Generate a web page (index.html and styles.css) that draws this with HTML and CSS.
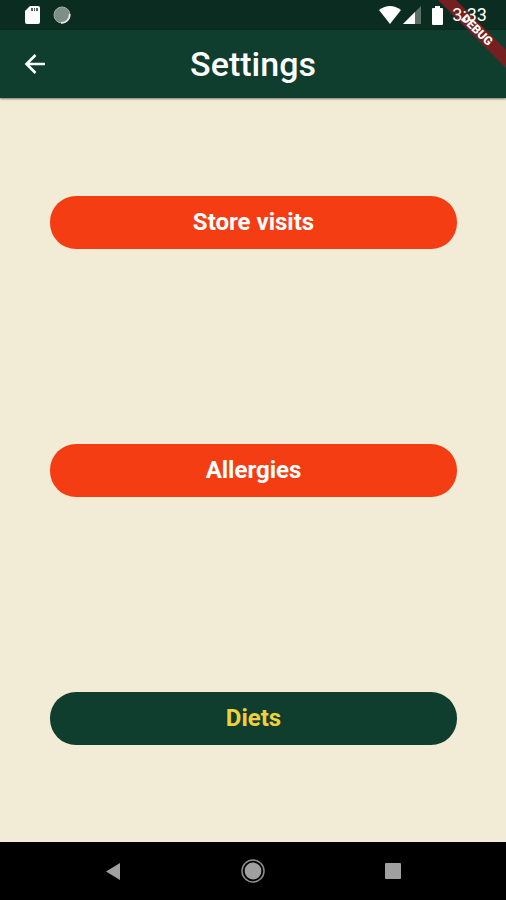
FILE: index.html
```html
<!DOCTYPE html>
<html lang="en">
  <head>
    <meta charset="UTF-8" />
    <meta name="viewport" content="width=device-width, initial-scale=1.0" />
    <title>Settings</title>
    <link rel="stylesheet" href="styles.css">
  </head>
  <body>
    <div class="screen">
      <div class="status-bar">
        <div class="status-left">
          <svg width="15" height="18" viewBox="0 0 15 18">
            <path fill="#fff" d="M5 0h8q2 0 2 2v14q0 2-2 2H2q-2 0-2-2V5z" />
            <path fill="#56635c" d="M6 2h2v3H6zM9 2h1v3H9zM11 2h2v3h-2z" />
          </svg>
          <svg width="18" height="18" viewBox="0 0 18 18">
            <circle cx="9" cy="9" r="8" fill="#7f8f88" stroke="#a3afa9" stroke-width="1" />
            <path d="M16.6 8A8 8 0 0 1 8 16.8" fill="none" stroke="#e6ebe8" stroke-width="1.6" />
          </svg>
        </div>
        <div class="status-right">
          <svg width="22" height="18" viewBox="0 0 22 18">
            <path fill="#fff" d="M0 4Q11-4 22 4L11 18z" />
          </svg>
          <svg width="18" height="18" viewBox="0 0 18 18">
            <path fill="#5a7067" d="M18 0v18H0z" />
            <path fill="#fff" d="M12 6v12H0z" />
          </svg>
          <svg class="battery" width="11" height="19" viewBox="0 0 11 19">
            <path fill="#fff" d="M3 0h5v2h2q1 0 1 1v15q0 1-1 1H1q-1 0-1-1V3q0-1 1-1h2z" />
          </svg>
          <span class="time">3:33</span>
        </div>
      </div>

      <header class="app-bar">
        <button class="back-btn" aria-label="Back">
          <svg width="22" height="22" viewBox="0 0 22 22">
            <path d="M21 11H3M11.5 2L2.5 11L11.5 20" fill="none" stroke="#fff" stroke-width="2.6" />
          </svg>
        </button>
        <h1>Settings</h1>
      </header>

      <main class="options">
        <button class="option">Store visits</button>
        <button class="option">Allergies</button>
        <button class="option diets">Diets</button>
      </main>

      <nav class="nav-bar">
        <button aria-label="Back">
          <svg width="24" height="24" viewBox="0 0 24 24">
            <path fill="#a0a0a0" d="M19 4v17L5 12.5z" />
          </svg>
        </button>
        <button aria-label="Home">
          <svg width="24" height="24" viewBox="0 0 24 24">
            <circle cx="12" cy="12" r="11" fill="none" stroke="#8c8c8c" stroke-width="1.5" />
            <circle cx="12" cy="12" r="8.4" fill="#a0a0a0" />
          </svg>
        </button>
        <button aria-label="Overview">
          <svg width="24" height="24" viewBox="0 0 24 24">
            <rect x="4" y="4" width="16" height="16" rx="1" fill="#a0a0a0" />
          </svg>
        </button>
      </nav>

      <svg class="debug-banner" width="68" height="68" viewBox="0 0 68 68">
        <path fill="#761f20" d="M0 0h18l50 50v18z" />
        <text x="39" y="30" dy="4" transform="rotate(45 39 30)" text-anchor="middle">DEBUG</text>
      </svg>
    </div>
  </body>
</html>
```

FILE: styles.css
```css
* {
    box-sizing: border-box;
}

body {
    margin: 0;
    font-family: Roboto, Arial, sans-serif;
    background-color: #f2ebd5;
}

.screen {
    position: relative;
    display: flex;
    flex-direction: column;
    min-height: 100vh;
    overflow: hidden;
}

button {
    padding: 0;
    border: none;
    background: none;
    font-family: inherit;
    cursor: pointer;
}

svg {
    display: block;
}

/* Status bar */

.status-bar {
    display: flex;
    justify-content: space-between;
    height: 30px;
    padding: 0 19px 0 25px;
    background: #0b2c21;
    color: #fff;
}

.status-left,
.status-right {
    display: flex;
    align-items: center;
}

.status-left {
    gap: 13px;
}

.status-right {
    gap: 2px;
}

.battery {
    margin: 0 7px 0 9px;
}

.time {
    position: relative;
    z-index: 2;
    font-size: 18px;
    line-height: 32px;
}

.debug-banner {
    position: absolute;
    top: 0;
    right: 0;
    z-index: 1;
}

.debug-banner text {
    fill: #fff;
    font-size: 12px;
    font-weight: 900;
}

/* App bar */

.app-bar {
    display: grid;
    grid-template-columns: 70px 1fr 70px;
    align-items: center;
    height: 68px;
    background: #0f3d2e;
    box-shadow: 0 1px 2px rgba(0, 0, 0, 0.5);
}

.back-btn {
    justify-self: center;
}

.app-bar h1 {
    margin: 0;
    color: #fff;
    font-size: 34px;
    font-weight: 500;
    line-height: 40px;
    text-align: center;
}

/* Options */

.options {
    flex: 1;
    display: flex;
    flex-direction: column;
    justify-content: space-around;
    padding: 0 49px 0 50px;
}

.option {
    height: 53px;
    border-radius: 26px;
    background: #f53d14;
    color: #fff;
    font-size: 24px;
    font-weight: 700;
    line-height: 28px;
}

.option.diets {
    background: #0f3d2e;
    color: #f0d03c;
}

/* Navigation bar */

.nav-bar {
    display: flex;
    justify-content: center;
    align-items: center;
    gap: 116px;
    height: 58px;
    background: #000;
}
```
